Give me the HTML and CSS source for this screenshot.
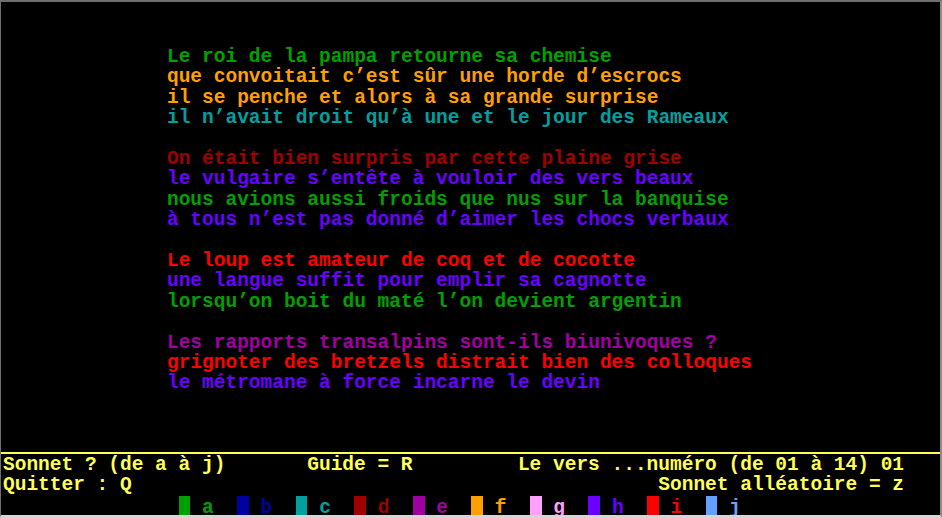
FILE: index.html
```html
<!DOCTYPE html>
<html lang="fr">
<head>
<meta charset="utf-8">
<title>Cent mille milliards de poèmes</title>
<link rel="stylesheet" href="styles.css">
</head>
<body>
<div class="screen">
  <div class="poem">
    <div class="stanza">
      <div class="line c-a">Le roi de la pampa retourne sa chemise</div>
      <div class="line c-f">que convoitait c’est sûr une horde d’escrocs</div>
      <div class="line c-f">il se penche et alors à sa grande surprise</div>
      <div class="line c-c">il n’avait droit qu’à une et le jour des Rameaux</div>
    </div>
    <div class="stanza">
      <div class="line c-d">On était bien surpris par cette plaine grise</div>
      <div class="line c-h">le vulgaire s’entête à vouloir des vers beaux</div>
      <div class="line c-a">nous avions aussi froids que nus sur la banquise</div>
      <div class="line c-h">à tous n’est pas donné d’aimer les chocs verbaux</div>
    </div>
    <div class="stanza">
      <div class="line c-i">Le loup est amateur de coq et de cocotte</div>
      <div class="line c-h">une langue suffit pour emplir sa cagnotte</div>
      <div class="line c-a">lorsqu’on boit du maté l’on devient argentin</div>
    </div>
    <div class="stanza">
      <div class="line c-e">Les rapports transalpins sont-ils biunivoques ?</div>
      <div class="line c-i">grignoter des bretzels distrait bien des colloques</div>
      <div class="line c-h">le métromane à force incarne le devin</div>
    </div>
  </div>
  <div class="footer">
    <div class="row">Sonnet ? (de a à j)       Guide = R         Le vers ...numéro (de 01 à 14) 01</div>
    <div class="row">Quitter : Q                                             Sonnet alléatoire = z</div>
    <div class="legend">
      <div class="key c-a"><span class="sw"></span><span class="lt">a</span></div>
      <div class="key c-b"><span class="sw"></span><span class="lt">b</span></div>
      <div class="key c-c"><span class="sw"></span><span class="lt">c</span></div>
      <div class="key c-d"><span class="sw"></span><span class="lt">d</span></div>
      <div class="key c-e"><span class="sw"></span><span class="lt">e</span></div>
      <div class="key c-f"><span class="sw"></span><span class="lt">f</span></div>
      <div class="key c-g"><span class="sw"></span><span class="lt">g</span></div>
      <div class="key c-h"><span class="sw"></span><span class="lt">h</span></div>
      <div class="key c-i"><span class="sw"></span><span class="lt">i</span></div>
      <div class="key c-j"><span class="sw"></span><span class="lt">j</span></div>
    </div>
  </div>
</div>
</body>
</html>
```
FILE: styles.css
```css
:root {
  --cw: 11.71px;
  --rh: 20.4px;
}
html, body {
  margin: 0;
  padding: 0;
  background: #000;
}
.screen {
  box-sizing: border-box;
  width: 942px;
  height: 518px;
  background: #000;
  border-top: 2px solid #6e6e6e;
  border-left: 1px solid #6e6e6e;
  border-right: 2px solid #8c8c8c;
  border-bottom: 3px solid #d6d6d6;
  display: flex;
  flex-direction: column;
  overflow: hidden;
  font-family: "Liberation Mono", "DejaVu Sans Mono", monospace;
  font-weight: bold;
  font-size: 19.517px;
  line-height: var(--rh);
}
.poem {
  padding-top: calc(2 * var(--rh) + 4.3px);
  padding-left: calc(14 * var(--cw) + 2px);
}
.stanza + .stanza {
  margin-top: var(--rh);
}
.line {
  white-space: pre;
  height: var(--rh);
}
.footer {
  margin-top: auto;
  border-top: 2px solid #ffff55;
  padding-top: 1px;
  padding-left: 2px;
  color: #ffff55;
}
.row {
  white-space: pre;
  height: var(--rh);
}
.legend {
  display: flex;
  height: calc(var(--rh) - 1px);
  padding-left: calc(15 * var(--cw));
}
.key {
  display: flex;
  width: calc(5 * var(--cw));
  height: 100%;
}
.sw {
  width: var(--cw);
  height: 100%;
  background: currentColor;
}
.lt {
  margin-left: var(--cw);
  width: var(--cw);
  padding-top: 2px;
  line-height: var(--rh);
}
.c-a { color: #00a000; }
.c-b { color: #0000a0; }
.c-c { color: #00a0a0; }
.c-d { color: #a00000; }
.c-e { color: #a000a0; }
.c-f { color: #ffa000; }
.c-g { color: #ffa0ff; }
.c-h { color: #6a00ff; }
.c-i { color: #ff0000; }
.c-j { color: #64a0ff; }
```
